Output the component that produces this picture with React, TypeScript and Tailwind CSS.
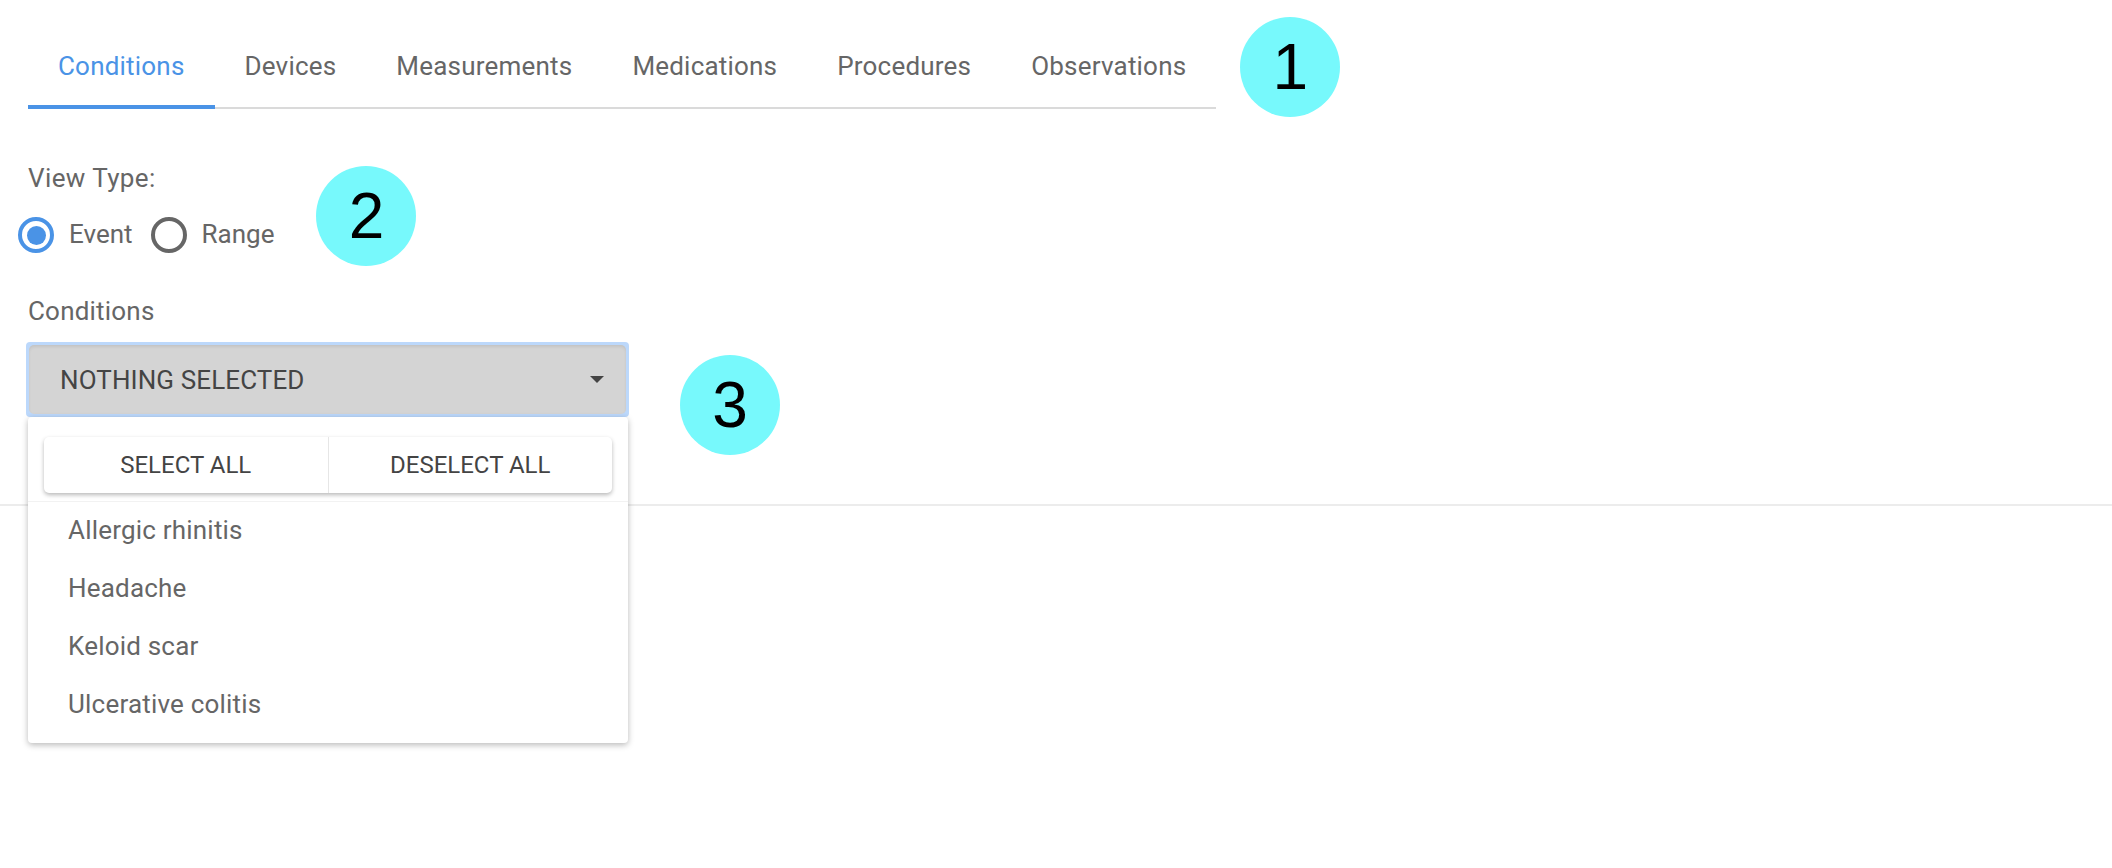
import React, { useState } from 'react';

const tabs = ['Conditions', 'Devices', 'Measurements', 'Medications', 'Procedures', 'Observations'];
const conditions = ['Allergic rhinitis', 'Headache', 'Keloid scar', 'Ulcerative colitis'];

function Marker({ n }: { n: number }) {
  return (
    <div className="flex h-[100px] w-[100px] shrink-0 items-center justify-center rounded-full bg-[#77f9fc] font-['Liberation_Sans',Arial,sans-serif] text-[64px] leading-none text-black">
      {n}
    </div>
  );
}

function Radio({ checked, label }: { checked: boolean; label: string }) {
  return (
    <label className="flex items-center gap-[15px]">
      <span
        className={
          checked
            ? 'flex h-[36px] w-[36px] items-center justify-center rounded-full border-4 border-[#4a93e6]'
            : 'flex h-[36px] w-[36px] items-center justify-center rounded-full border-4 border-[#666666]'
        }
      >
        {checked && <span className="h-[19px] w-[19px] rounded-full bg-[#4a93e6]" />}
      </span>
      <span className="-mt-[2px] text-[26px] leading-[30px] text-[#666666]">{label}</span>
    </label>
  );
}

export default function App() {
  const [active, setActive] = useState(0);

  return (
    <div className="min-h-[868px] bg-white pt-[17px] px-[28px] font-['Roboto','Noto_Sans',sans-serif]">
      {/* Tabs */}
      <div className="flex items-start">
        <div className="mt-[14px] flex border-b-2 border-[#dadada]">
          {tabs.map((t, i) => (
            <button
              key={t}
              onClick={() => setActive(i)}
              className={
                i === active
                  ? '-mb-[2px] border-b-4 border-[#4a93e6] px-[30px] pt-[20px] pb-[24px] text-[26px] leading-[30px] tracking-[0.2px] text-[#4a93e6]'
                  : '-mb-[2px] border-b-4 border-transparent px-[30px] pt-[20px] pb-[24px] text-[26px] leading-[30px] tracking-[0.2px] text-[#666666]'
              }
            >
              {t}
            </button>
          ))}
        </div>
        <div className="ml-[24px]">
          <Marker n={1} />
        </div>
      </div>

      {/* View type */}
      <div className="mt-[46px] flex items-start">
        <div>
          <div className="text-[26px] leading-[30px] tracking-[0.4px] text-[#666666]">View Type:</div>
          <div className="-ml-[10px] mt-[24px] flex items-center gap-[18px]">
            <Radio checked label="Event" />
            <Radio checked={false} label="Range" />
          </div>
        </div>
        <div className="ml-[42px] mt-[3px]">
          <Marker n={2} />
        </div>
      </div>

      {/* Conditions select */}
      <div className="mt-[30px] text-[26px] leading-[30px] tracking-[0.2px] text-[#666666]">Conditions</div>
      <div className="mt-[16px] flex items-start">
        <div className="relative -ml-[2px] w-[603px]">
          <div className="rounded-[4px] bg-[#bcd8fb] p-[3px]">
            <div className="flex h-[69px] items-center justify-between rounded-[5px] bg-[#d4d4d4] pl-[31px] pr-[22px] shadow-[inset_0_2px_3px_rgba(0,0,0,0.08)]">
              <span className="text-[26px] leading-[30px] tracking-[0.1px] text-[#444444]">NOTHING SELECTED</span>
              <span className="h-0 w-0 border-x-[7px] border-t-[7px] border-x-transparent border-t-[#444444]" />
            </div>
          </div>

          {/* Dropdown menu */}
          <div className="absolute left-[2px] top-full z-10 w-[600px] rounded-[4px] bg-white px-[16px] pt-[20px] pb-[10px] shadow-[0_2px_6px_rgba(0,0,0,0.28)]">
            <div className="flex h-[56px] rounded-[5px] bg-white shadow-[0_2px_4px_rgba(0,0,0,0.28)]">
              <button className="flex-1 text-[24px] text-[#444444]">SELECT ALL</button>
              <div className="w-px bg-[#e6e6e6]" />
              <button className="flex-1 text-[24px] text-[#444444]">DESELECT ALL</button>
            </div>
            <div className="-mx-[16px] mt-[8px] h-px bg-[#f2f2f2]" />
            <ul className="-mt-[1px]">
              {conditions.map((c) => (
                <li key={c} className="flex h-[58px] items-center px-[24px] text-[26px] tracking-[0.2px] text-[#666666]">
                  {c}
                </li>
              ))}
            </ul>
          </div>
        </div>
        <div className="ml-[51px] mt-[13px]">
          <Marker n={3} />
        </div>
      </div>

      <div className="-mx-[28px] mt-[49px] h-[2px] bg-[#ececec]" />
    </div>
  );
}
